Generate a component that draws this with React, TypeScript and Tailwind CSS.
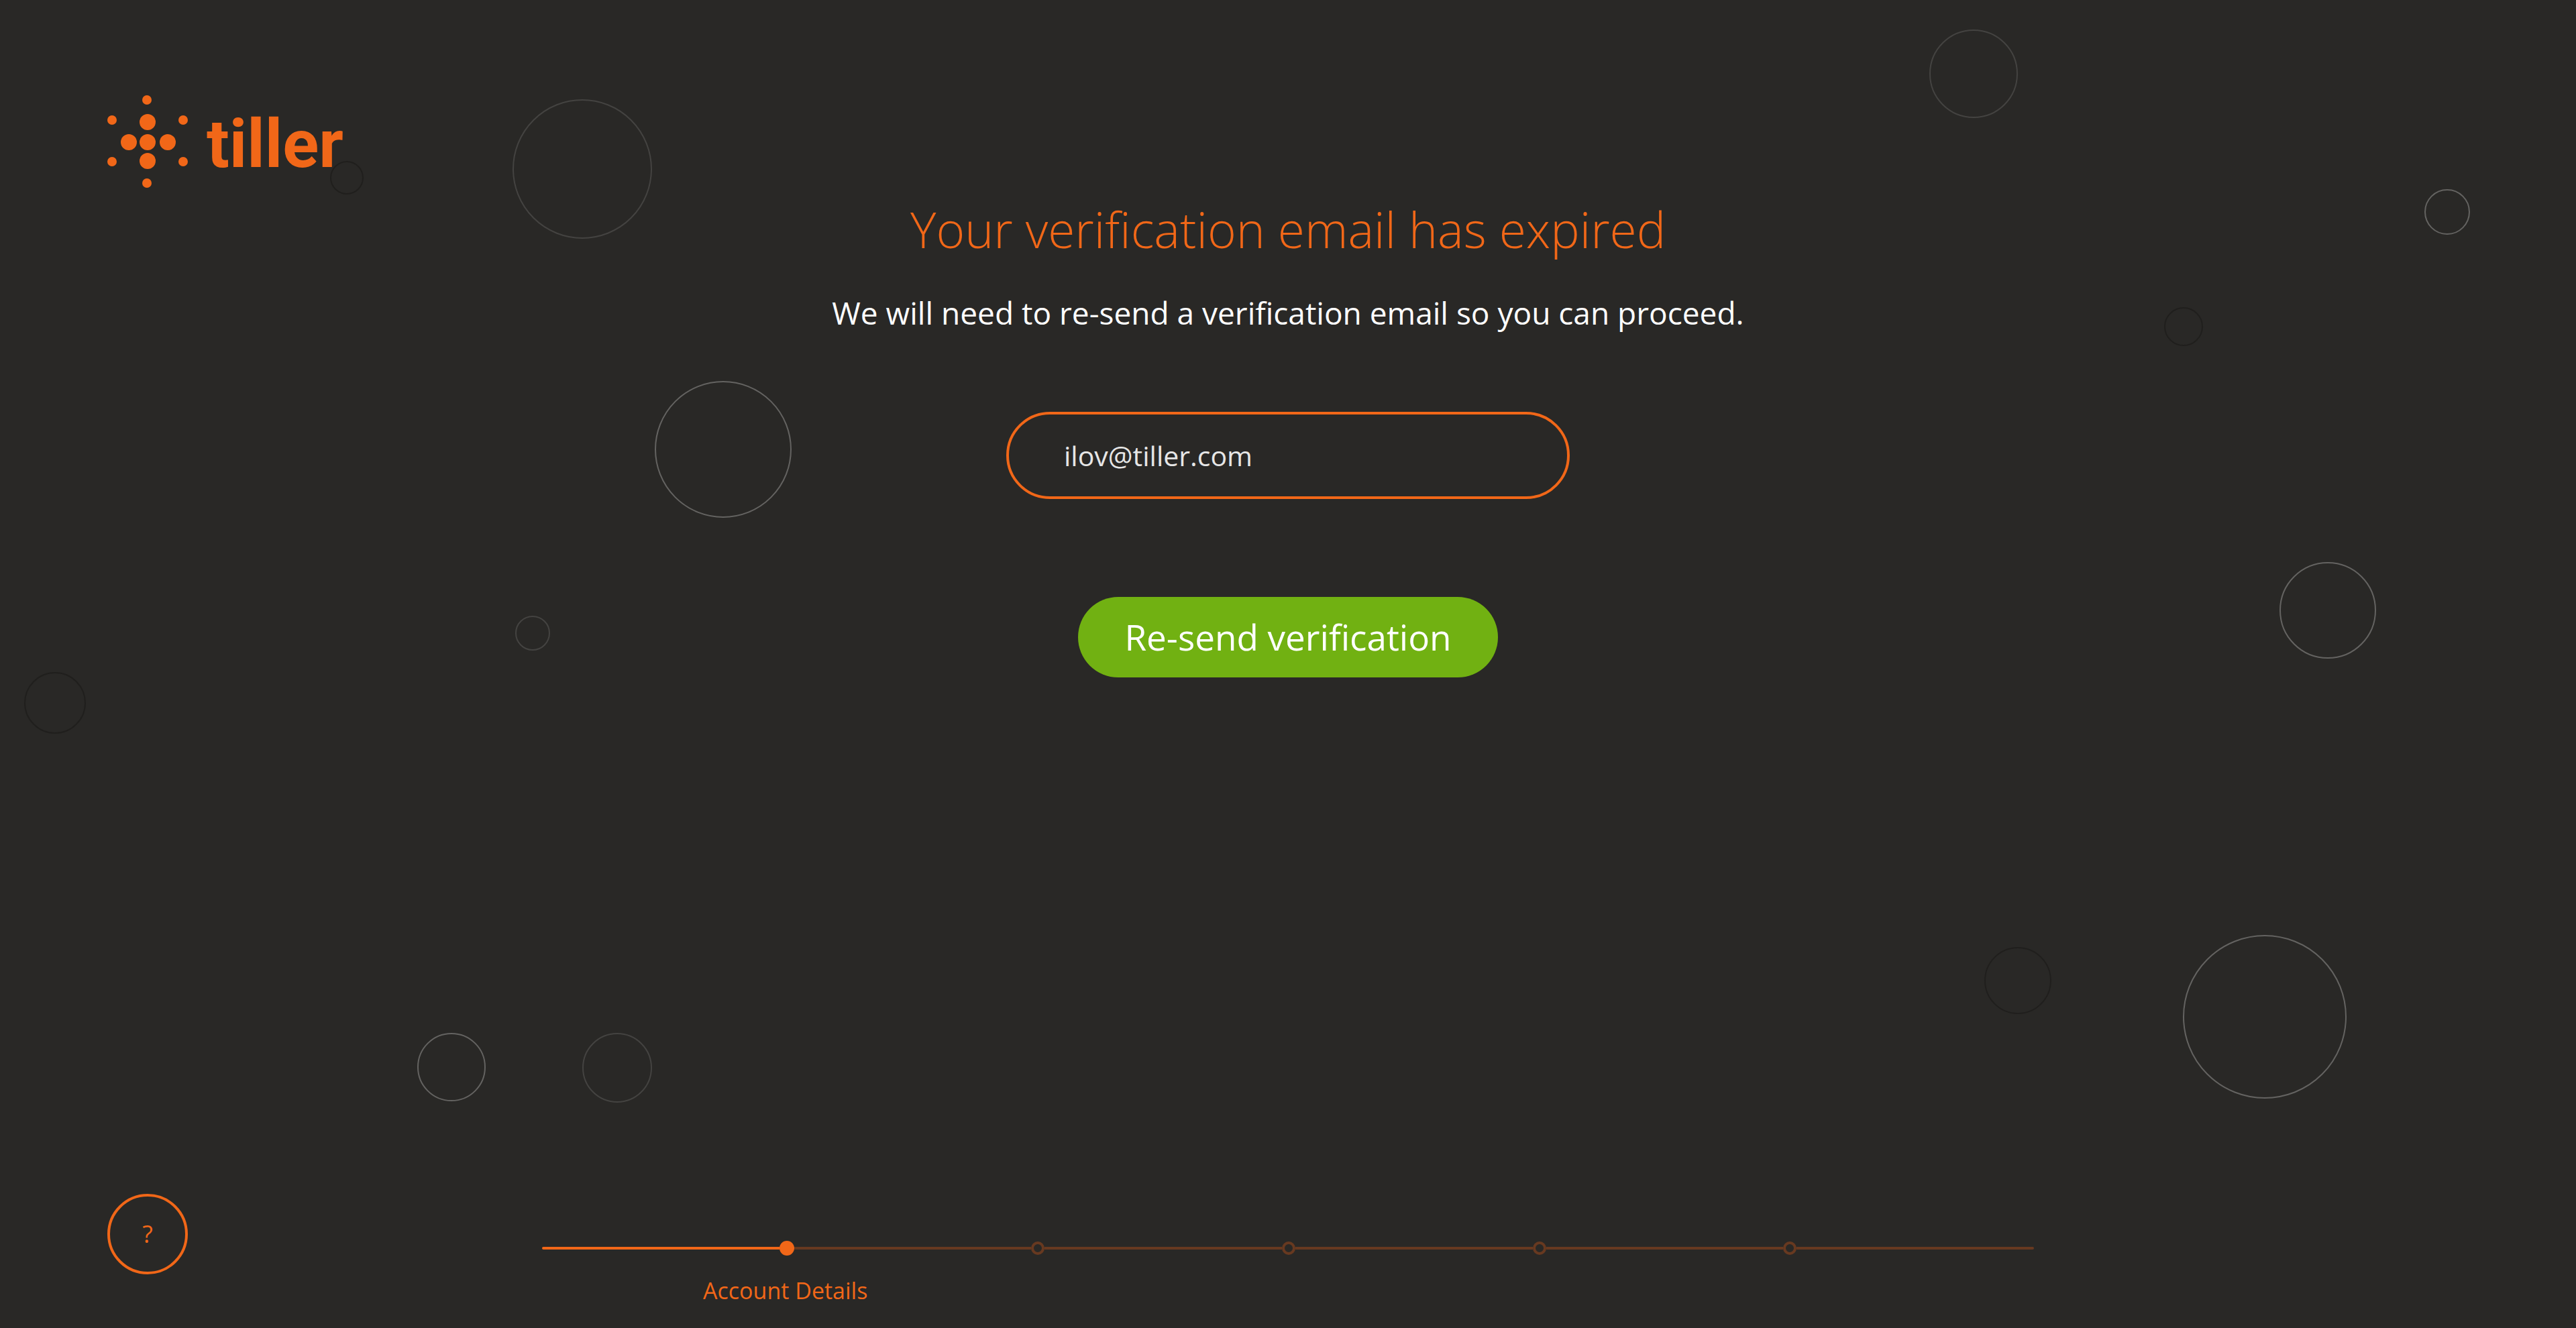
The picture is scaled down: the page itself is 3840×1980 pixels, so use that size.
import { useState } from "react";

type Tone = "bright" | "dim" | "dark";

const TONES: Record<Tone, string> = {
  bright: "#646361",
  dim: "#444341",
  dark: "#201f1d",
};

// Bubbles floating behind the content: centre x, centre y, diameter, tone.
const BUBBLES: [number, number, number, Tone][] = [
  [868, 252, 208, "dim"],
  [1078, 670, 204, "bright"],
  [2942, 110, 132, "dim"],
  [3648, 316, 68, "bright"],
  [3255, 487, 58, "dark"],
  [3470, 910, 144, "bright"],
  [3008, 1462, 100, "dark"],
  [3376, 1516, 244, "bright"],
  [794, 944, 52, "dim"],
  [673, 1591, 102, "bright"],
  [920, 1592, 104, "dim"],
  [82, 1048, 92, "dark"],
  [517, 265, 50, "dark"],
];

const LOGO_DOTS: [number, number, number][] = [
  [59, 7, 7],
  [7, 37, 7],
  [113, 37, 7],
  [7, 99, 7],
  [113, 99, 7],
  [59, 131, 7],
  [60, 40, 12],
  [32, 70, 12],
  [60, 70, 12],
  [90, 70, 12],
  [60, 98, 12],
];

const STEPS = ["Account Details", "Step 2", "Step 3", "Step 4", "Step 5"];

function Bubbles() {
  return (
    <svg
      className="absolute inset-0 size-full"
      viewBox="0 0 3840 1980"
      preserveAspectRatio="xMidYMid slice"
      fill="none"
      strokeWidth="2"
      aria-hidden="true"
    >
      {BUBBLES.map(([x, y, d, tone]) => (
        <circle key={`${x}-${y}`} cx={x} cy={y} r={d / 2 - 1} stroke={TONES[tone]} />
      ))}
    </svg>
  );
}

function Logo() {
  return (
    <a href="#" className="flex w-fit items-center gap-7 text-[#f16718]" aria-label="tiller">
      <svg className="h-[138px] w-[120px]" viewBox="0 0 120 138" fill="currentColor" aria-hidden="true">
        {LOGO_DOTS.map(([x, y, r]) => (
          <circle key={`${x}-${y}`} cx={x} cy={y} r={r} />
        ))}
      </svg>
      <span className="pt-2 font-['Roboto',sans-serif] text-[100px] leading-[128px] font-bold">tiller</span>
    </a>
  );
}

function Progress({ current }: { current: number }) {
  return (
    <nav aria-label="Progress" className="pb-[34px]">
      <ol className="mb-[30px] flex h-[22px] items-center">
        {STEPS.map((step, i) => (
          <li key={step} className="flex flex-auto items-center" aria-current={i === current ? "step" : undefined}>
            <span className={i <= current ? "h-1 flex-1 rounded-l-sm bg-[#f16718]" : "h-1 flex-1 bg-[#673920]"} />
            <span
              className={
                i <= current
                  ? "size-[22px] rounded-full bg-[#f16718]"
                  : "size-5 rounded-full border-4 border-[#673920]"
              }
            />
          </li>
        ))}
        <li className="flex flex-auto" aria-hidden="true">
          <span className="h-1 flex-1 rounded-r-sm bg-[#673920]" />
        </li>
      </ol>
      <p className="w-[32.6%] text-center text-[34px] leading-[44px] text-[#f16718]">{STEPS[current]}</p>
    </nav>
  );
}

export default function App() {
  const [email, setEmail] = useState("ilov@tiller.com");

  return (
    <div className="relative isolate flex min-h-screen flex-col overflow-hidden bg-[#292826] font-['Open_Sans',sans-serif] text-white">
      <header className="px-40 pt-[142px]">
        <Logo />
      </header>

      <main className="flex flex-1 flex-col items-center px-8 pt-[22px] text-center">
        <h1 className="text-[73px] leading-[80px] font-light text-[#f16718]">Your verification email has expired</h1>
        <p className="mt-[52px] text-[46px] leading-[64px]">
          We will need to re-send a verification email so you can proceed.
        </p>
        <form className="mt-[116px] flex w-full flex-col items-center" onSubmit={(e) => e.preventDefault()}>
          <input
            type="email"
            aria-label="Email address"
            value={email}
            onChange={(e) => setEmail(e.target.value)}
            className="h-[130px] w-full max-w-[840px] rounded-full border-4 border-[#f16718] bg-transparent px-[82px] text-[41px] text-[#e6e6e6] outline-none"
          />
          <button
            type="submit"
            className="mt-[146px] h-[120px] rounded-full bg-[#71b112] px-[69px] text-[53px] whitespace-nowrap text-white"
          >
            Re-send verification
          </button>
        </form>
      </main>

      <footer className="grid grid-cols-[1fr_57.9%_1fr] items-end">
        <div className="pb-20 pl-40">
          <button
            type="button"
            aria-label="Help"
            className="size-[120px] rounded-full border-4 border-[#f16718] text-[36px] text-[#f16718]"
          >
            ?
          </button>
        </div>
        <Progress current={0} />
      </footer>

      <div className="pointer-events-none absolute inset-0 -z-10">
        <Bubbles />
      </div>
    </div>
  );
}
